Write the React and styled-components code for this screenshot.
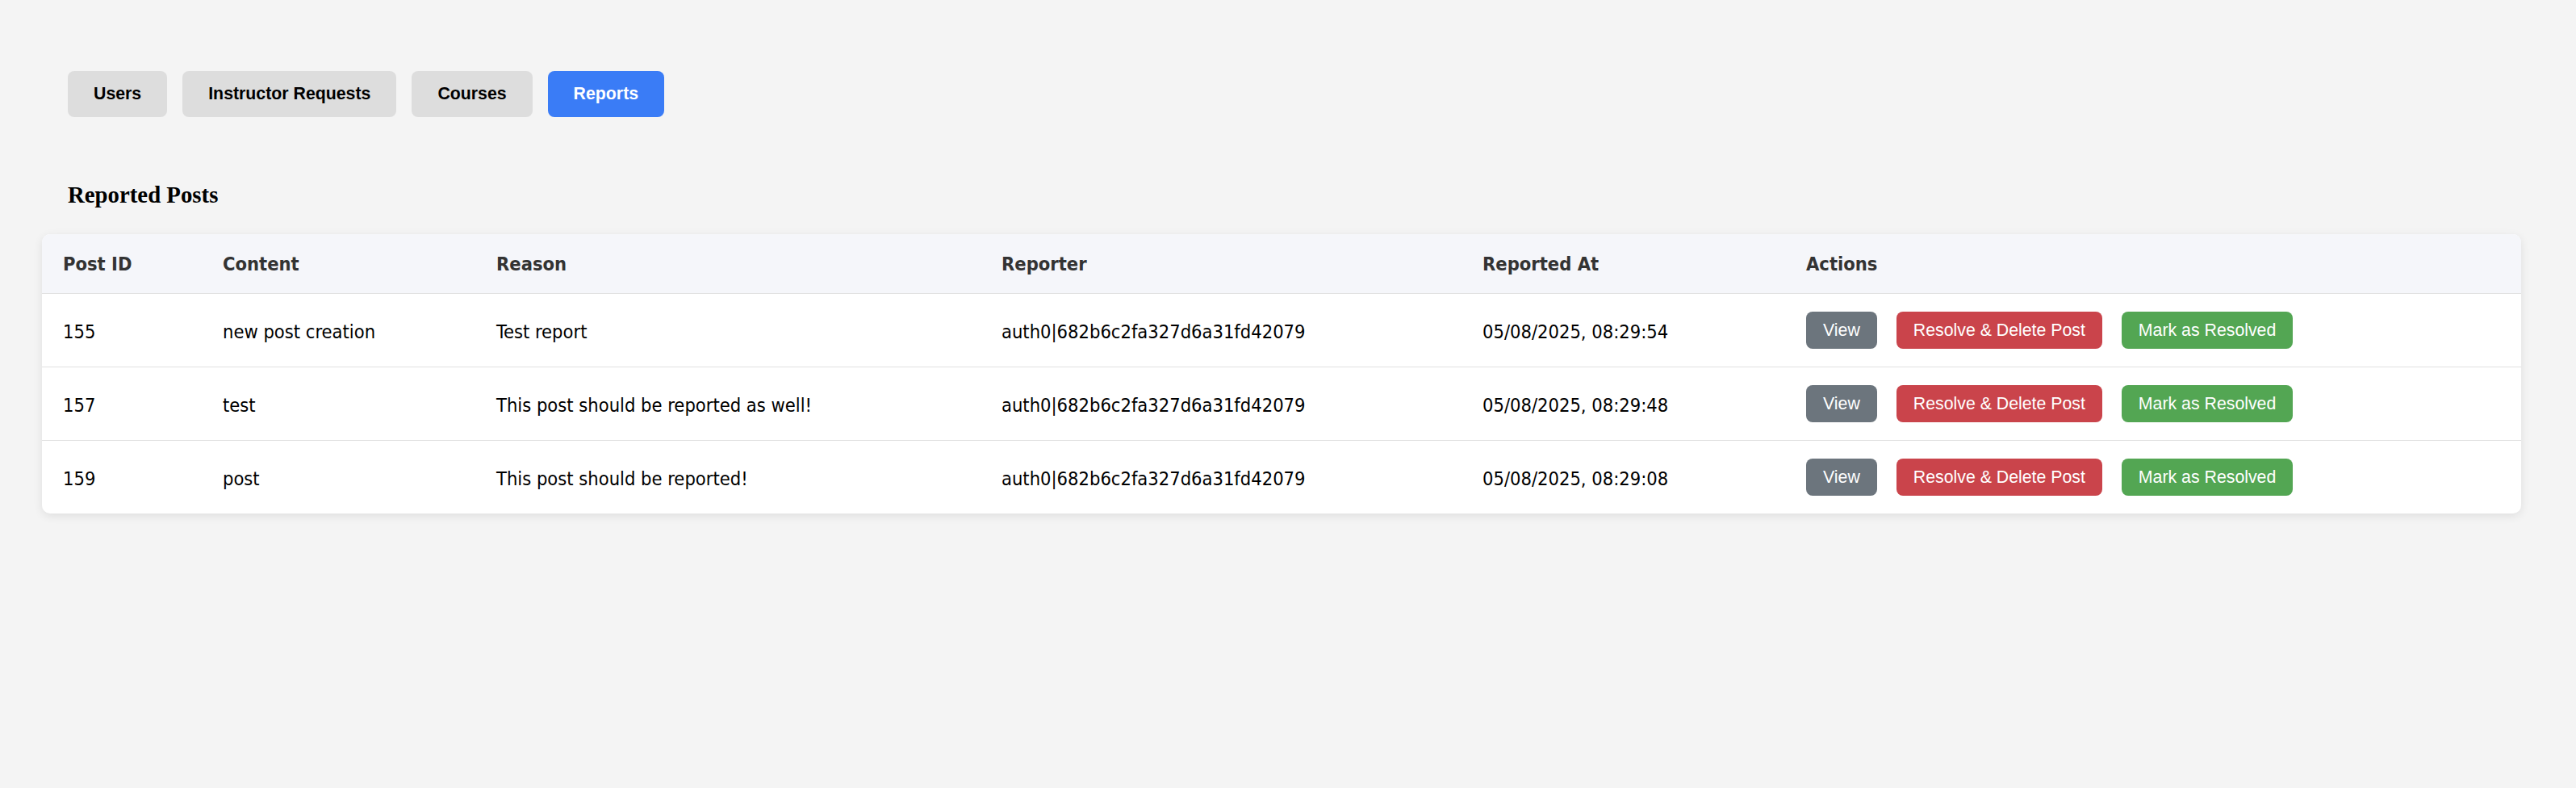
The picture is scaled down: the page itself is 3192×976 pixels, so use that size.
import React, { useState } from 'react'
import styled, { createGlobalStyle } from 'styled-components'

const GlobalStyle = createGlobalStyle`
    html, body {
        margin: 0;
        padding: 0;
        background: #f4f4f4;
    }

    body {
        font-family: "Liberation Sans", Arial, sans-serif;
        min-height: 976px;
    }
`

const Page = styled.div`
    padding: 88px 68px 0 52px;
`

const TabBar = styled.nav`
    display: flex;
    gap: 19px;
    padding-left: 32px;
`

const Tab = styled.button`
    height: 57px;
    padding: 0 32px;
    border: none;
    border-radius: 8px;
    background: ${(p) => (p.$active ? '#3a7cf6' : '#dddddd')};
    color: ${(p) => (p.$active ? '#ffffff' : '#000000')};
    font-family: "Liberation Sans", Arial, sans-serif;
    font-weight: 700;
    font-size: 21.3px;
    cursor: pointer;
`

const Heading = styled.h3`
    margin: 80px 0 32px 32px;
    font-family: "Liberation Serif", "Times New Roman", serif;
    font-weight: 700;
    font-size: 28.8px;
    line-height: 33px;
    color: #000;
`

const Card = styled.div`
    background: #ffffff;
    border-radius: 10px;
    overflow: hidden;
    box-shadow: 0 3px 12px rgba(0, 0, 0, 0.09);
`

const Table = styled.table`
    width: 100%;
    border-collapse: collapse;
    table-layout: fixed;
    font-family: "DejaVu Sans Condensed", "DejaVu Sans", sans-serif;
    font-stretch: condensed;
    font-size: 23.5px;

    th {
        height: 73px;
        padding: 0 26px;
        text-align: left;
        font-weight: 700;
        color: #333333;
        background: #f5f6fa;
        border-bottom: 1px solid #e1e1e1;
    }

    td {
        height: 87px;
        padding: 3px 26px 0;
        color: #000000;
        border-bottom: 1px solid #e1e1e1;
        white-space: nowrap;
    }

    tbody tr:last-child td {
        border-bottom: none;
    }
`

const Actions = styled.div`
    display: flex;
    gap: 24px;
    margin-top: -3px;
`

const ActionButton = styled.button`
    height: 46px;
    padding: 0 21px;
    border: none;
    border-radius: 8px;
    background: ${(p) => p.$bg};
    color: #ffffff;
    font-family: "Liberation Sans", Arial, sans-serif;
    font-size: 21.3px;
    cursor: pointer;
`

const tabs = ['Users', 'Instructor Requests', 'Courses', 'Reports']

const reports = [
    { id: 155, content: 'new post creation', reason: 'Test report', at: '05/08/2025, 08:29:54' },
    { id: 157, content: 'test', reason: 'This post should be reported as well!', at: '05/08/2025, 08:29:48' },
    { id: 159, content: 'post', reason: 'This post should be reported!', at: '05/08/2025, 08:29:08' },
]

const reporter = 'auth0|682b6c2fa327d6a31fd42079'

export default function App() {
    const [active, setActive] = useState('Reports')

    return (
        <Page>
            <GlobalStyle />

            <TabBar>
                {tabs.map((t) => (
                    <Tab key={t} $active={t === active} onClick={() => setActive(t)}>
                        {t}
                    </Tab>
                ))}
            </TabBar>

            <Heading>Reported Posts</Heading>

            <Card>
                <Table>
                    <colgroup>
                        <col style={{ width: 198 }} />
                        <col style={{ width: 339 }} />
                        <col style={{ width: 626 }} />
                        <col style={{ width: 596 }} />
                        <col style={{ width: 401 }} />
                        <col />
                    </colgroup>
                    <thead>
                        <tr>
                            <th>Post ID</th>
                            <th>Content</th>
                            <th>Reason</th>
                            <th>Reporter</th>
                            <th>Reported At</th>
                            <th>Actions</th>
                        </tr>
                    </thead>
                    <tbody>
                        {reports.map((r) => (
                            <tr key={r.id}>
                                <td>{r.id}</td>
                                <td>{r.content}</td>
                                <td>{r.reason}</td>
                                <td>{reporter}</td>
                                <td>{r.at}</td>
                                <td>
                                    <Actions>
                                        <ActionButton $bg="#6c757d">View</ActionButton>
                                        <ActionButton $bg="#ca444b">Resolve &amp; Delete Post</ActionButton>
                                        <ActionButton $bg="#53a653">Mark as Resolved</ActionButton>
                                    </Actions>
                                </td>
                            </tr>
                        ))}
                    </tbody>
                </Table>
            </Card>
        </Page>
    )
}
